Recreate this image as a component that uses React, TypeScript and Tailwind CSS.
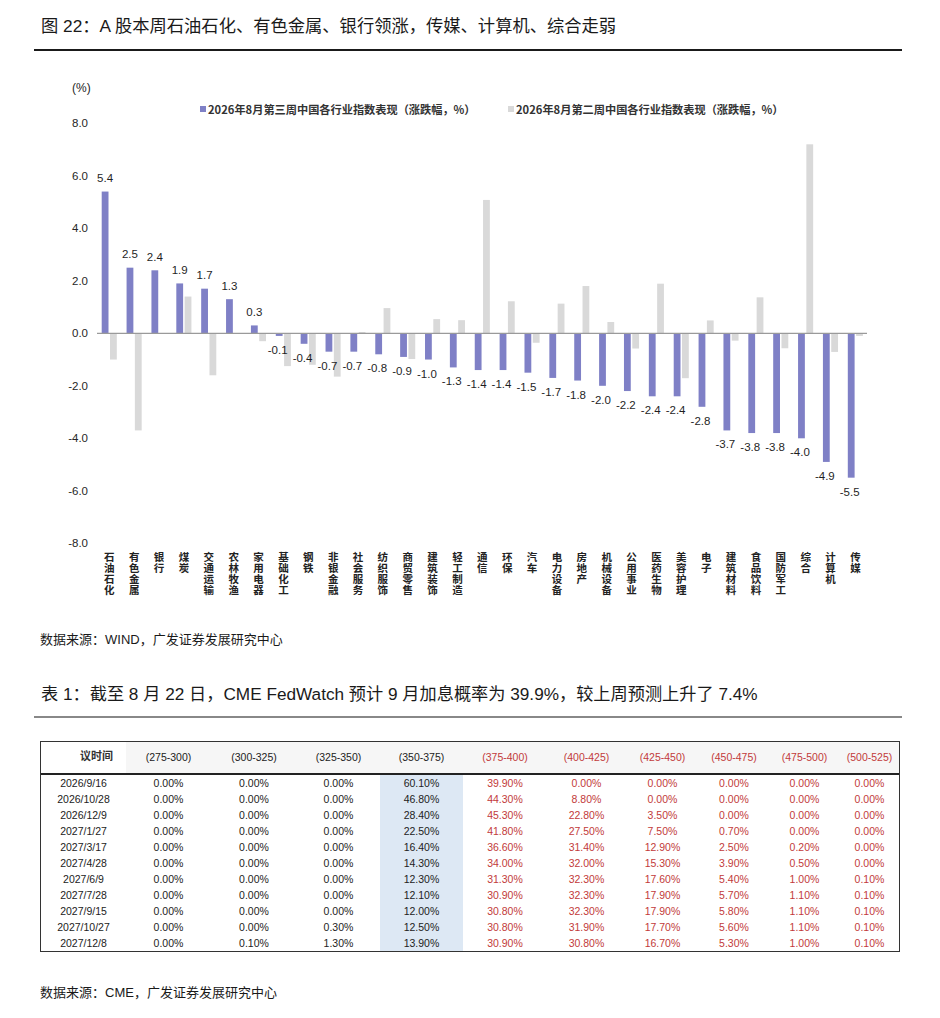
import React from "react";

// ─── Data ────────────────────────────────────────────────────────────────────

const SECTORS = [
  "石油石化", "有色金属", "银行", "煤炭", "交通运输", "农林牧渔", "家用电器", "基础化工",
  "钢铁", "非银金融", "社会服务", "纺织服饰", "商贸零售", "建筑装饰", "轻工制造", "通信",
  "环保", "汽车", "电力设备", "房地产", "机械设备", "公用事业", "医药生物", "美容护理",
  "电子", "建筑材料", "食品饮料", "国防军工", "综合", "计算机", "传媒",
];

const THIS_WEEK = [
  5.4, 2.5, 2.4, 1.9, 1.7, 1.3, 0.3, -0.1, -0.4, -0.7, -0.7, -0.8, -0.9, -1.0, -1.3, -1.4,
  -1.4, -1.5, -1.7, -1.8, -2.0, -2.2, -2.4, -2.4, -2.8, -3.7, -3.8, -3.8, -4.0, -4.9, -5.5,
];

const LAST_WEEK = [
  -1.0, -3.7, 0, 1.4, -1.6, 0, -0.3, -1.25, -1.2, -1.65, 0.05, 0.96, -0.98, 0.54, 0.5, 5.08,
  1.22, -0.36, 1.13, 1.8, 0.43, -0.58, 1.89, -1.71, 0.49, -0.28, 1.37, -0.57, 7.2, -0.71, -0.1,
];

const TICKS = [8, 6, 4, 2, 0, -2, -4, -6, -8];

const HEADERS = [
  "(275-300)", "(300-325)", "(325-350)", "(350-375)", "(375-400)",
  "(400-425)", "(425-450)", "(450-475)", "(475-500)", "(500-525)",
];

const ROWS: [string, string[]][] = [
  ["2026/9/16", ["0.00%", "0.00%", "0.00%", "60.10%", "39.90%", "0.00%", "0.00%", "0.00%", "0.00%", "0.00%"]],
  ["2026/10/28", ["0.00%", "0.00%", "0.00%", "46.80%", "44.30%", "8.80%", "0.00%", "0.00%", "0.00%", "0.00%"]],
  ["2026/12/9", ["0.00%", "0.00%", "0.00%", "28.40%", "45.30%", "22.80%", "3.50%", "0.00%", "0.00%", "0.00%"]],
  ["2027/1/27", ["0.00%", "0.00%", "0.00%", "22.50%", "41.80%", "27.50%", "7.50%", "0.70%", "0.00%", "0.00%"]],
  ["2027/3/17", ["0.00%", "0.00%", "0.00%", "16.40%", "36.60%", "31.40%", "12.90%", "2.50%", "0.20%", "0.00%"]],
  ["2027/4/28", ["0.00%", "0.00%", "0.00%", "14.30%", "34.00%", "32.00%", "15.30%", "3.90%", "0.50%", "0.00%"]],
  ["2027/6/9", ["0.00%", "0.00%", "0.00%", "12.30%", "31.30%", "32.30%", "17.60%", "5.40%", "1.00%", "0.10%"]],
  ["2027/7/28", ["0.00%", "0.00%", "0.00%", "12.10%", "30.90%", "32.30%", "17.90%", "5.70%", "1.10%", "0.10%"]],
  ["2027/9/15", ["0.00%", "0.00%", "0.00%", "12.00%", "30.80%", "32.30%", "17.90%", "5.80%", "1.10%", "0.10%"]],
  ["2027/10/27", ["0.00%", "0.00%", "0.30%", "12.50%", "30.80%", "31.90%", "17.70%", "5.60%", "1.10%", "0.10%"]],
  ["2027/12/8", ["0.00%", "0.10%", "1.30%", "13.90%", "30.90%", "30.80%", "16.70%", "5.30%", "1.00%", "0.10%"]],
];

// ─── Chart geometry (svg coords, svg top = page y 120) ───────────────────────

const Y0 = 213.3;
const K = 26.25;
const X0 = 101.7;
const STEP = 24.87;
const BW = 6.8;
const SANS = "'Liberation Sans', 'Noto Sans CJK SC', sans-serif";
const CJK = "'Noto Sans CJK SC', sans-serif";

function BarChart() {
  return (
    <svg width={940} height={500} className="block overflow-visible">
      {TICKS.map((t) => (
        <text
          key={t}
          x={88}
          y={Y0 - K * t + 4}
          textAnchor="end"
          fontSize={11.5}
          fill="#262626"
          fontFamily={SANS}
        >
          {t.toFixed(1)}
        </text>
      ))}

      {LAST_WEEK.map((v, i) => {
        const h = Math.abs(v) * K;
        return (
          <rect
            key={"p" + i}
            x={X0 + STEP * i + 8.3}
            y={v >= 0 ? Y0 - h : Y0}
            width={BW}
            height={h}
            fill="#d9d9d9"
          />
        );
      })}

      {THIS_WEEK.map((v, i) => {
        const h = Math.abs(v) * K;
        return (
          <rect
            key={"c" + i}
            x={X0 + STEP * i}
            y={v >= 0 ? Y0 - h : Y0}
            width={BW}
            height={h}
            fill="#7f80c6"
          />
        );
      })}

      <line x1={97} x2={867} y1={Y0} y2={Y0} stroke="#9a9a9a" strokeWidth={1.3} />

      {THIS_WEEK.map((v, i) => {
        const h = Math.abs(v) * K;
        const cx = X0 + STEP * i + BW / 2;
        return (
          <text
            key={"l" + i}
            x={v < 0 ? cx - 1.5 : cx}
            y={v >= 0 ? Y0 - h - 9.5 : Y0 + h + 18}
            textAnchor="middle"
            fontSize={11.5}
            fill="#1f1f1f"
            fontFamily={SANS}
          >
            {v.toFixed(1)}
          </text>
        );
      })}

      {/* category labels, stacked vertically */}
      {SECTORS.map((name, i) => (
        <text
          key={name}
          x={X0 + STEP * i + 7.6}
          y={432}
          fontSize={10.5}
          fontWeight={700}
          fill="#222"
          fontFamily={CJK}
          letterSpacing={0.4}
          style={{ writingMode: "vertical-rl", textOrientation: "upright" }}
        >
          {name}
        </text>
      ))}
    </svg>
  );
}

// ─── Table ───────────────────────────────────────────────────────────────────

const COLS = "grid grid-cols-[85px_85px_86px_83px_83px_84px_79px_73px_70px_71px_59px]";

function FedWatchTable() {
  return (
    <div className="ml-[40px] w-[860px] border border-[#333] font-['Liberation_Sans','Noto_Sans_CJK_SC',sans-serif] text-[10.5px]">
      <div className={`${COLS} h-[33px] border-b-2 border-[#222] items-center`}>
        <div className="h-full flex items-center justify-end pr-[13px] bg-white font-bold text-[11px] text-[#333] pb-[3px]">
          议时间
        </div>
        {HEADERS.map((h, i) => (
          <div
            key={h}
            className={`h-full flex items-center justify-center bg-[#f6f6f6] ${i >= 4 ? "text-[#c23a3a]" : "text-[#222]"}`}
          >
            {h}
          </div>
        ))}
      </div>
      {ROWS.map(([date, vals]) => (
        <div key={date} className={`${COLS} h-[16px] items-center leading-[16px]`}>
          <div className="text-center text-[#222]">{date}</div>
          {vals.map((v, i) => (
            <div
              key={i}
              className={`text-center ${i === 3 ? "bg-[#dde8f4]" : ""} ${i >= 4 ? "text-[#c23a3a]" : "text-[#222]"}`}
            >
              {v}
            </div>
          ))}
        </div>
      ))}
    </div>
  );
}

// ─── Page ────────────────────────────────────────────────────────────────────

export default function App() {
  return (
    <div className="w-[940px] h-[1018px] bg-white text-[#1a1a1a] font-['Liberation_Sans','Noto_Sans_CJK_SC',sans-serif] overflow-hidden">
      {/* Figure title */}
      <div className="h-[49px] pt-[14px] pl-[41px] text-[17.3px] leading-[24px]">
        图 22：A 股本周石油石化、有色金属、银行领涨，传媒、计算机、综合走弱
      </div>
      <div className="ml-[34px] w-[868px] h-[2px] bg-[#1a1a1a]" />

      {/* Unit + legend */}
      <div className="h-[47px] pt-[29px] pl-[72px] text-[12px] leading-[16px] text-[#262626]">(%)</div>
      <div className="h-[22px] flex items-center pl-[200px] text-[11.2px] font-bold text-[#333] font-['Noto_Sans_CJK_SC',sans-serif]">
        <div className="w-[308px] flex items-center gap-[2px]">
          <span className="w-[6px] h-[6px] bg-[#7f80c6]" />
          <span>2026年8月第三周中国各行业指数表现（涨跌幅，%）</span>
        </div>
        <div className="flex items-center gap-[2px]">
          <span className="w-[6px] h-[6px] bg-[#d9d9d9]" />
          <span>2026年8月第二周中国各行业指数表现（涨跌幅，%）</span>
        </div>
      </div>

      <BarChart />

      <div className="h-[39px] pt-[11px] pl-[40px] text-[13px] leading-[18px] text-[#1a1a1a]">
        数据来源：WIND，广发证券发展研究中心
      </div>

      {/* Table title */}
      <div className="pt-[23px] pl-[41px] text-[17.2px] leading-[24px]">
        表 1：截至 8 月 22 日，CME FedWatch 预计 9 月加息概率为 39.9%，较上周预测上升了 7.4%
      </div>
      <div className="mt-[10px] ml-[34px] w-[868px] h-[2px] bg-[#888]" />

      <div className="mt-[23px]">
        <FedWatchTable />
      </div>

      <div className="mt-[32px] pl-[40px] text-[13px] leading-[18px] text-[#1a1a1a]">
        数据来源：CME，广发证券发展研究中心
      </div>
    </div>
  );
}
